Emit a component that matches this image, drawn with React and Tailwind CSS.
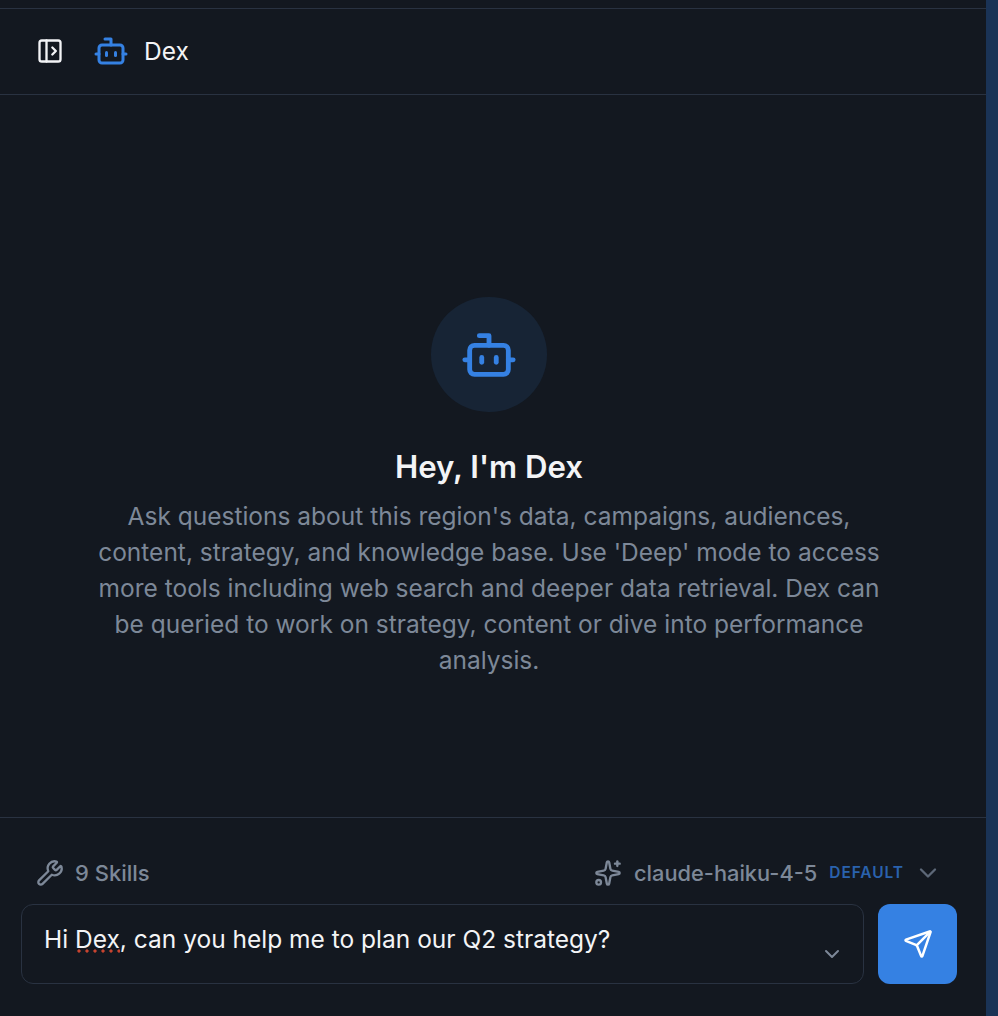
import React from "react";
import { Bot, PanelLeftOpen, Wrench, Sparkles, ChevronDown, Send } from "lucide-react";

export default function App() {
  return (
    <div className="flex h-[1016px] w-[998px] overflow-hidden bg-[#131820] font-['Inter',sans-serif]">
      <main className="flex w-[986px] flex-col">
        <div className="h-[8px] shrink-0" />
        <header className="flex h-[87px] shrink-0 items-center border-y border-[#293241] pb-[1px] pl-[36px]">
          <PanelLeftOpen className="h-[28px] w-[28px] text-[#f3f4f6]" strokeWidth={2} />
          <Bot className="ml-[29px] h-[36px] w-[36px] text-[#3581e3]" strokeWidth={2} />
          <span className="ml-[15px] text-[24.5px] font-normal leading-[32px] text-[#f3f4f6]">Dex</span>
        </header>
        <section className="flex min-h-0 flex-1 flex-col items-center pr-[8px] pt-[202px]">
          <div className="flex h-[115px] w-[116px] items-center justify-center rounded-full bg-[#172435]">
            <Bot className="h-[58px] w-[58px] text-[#3581e3]" strokeWidth={2} />
          </div>
          <h1 className="mt-[35px] text-[31.2px] font-semibold leading-[40px] text-[#f3f4f6]">Hey, I'm Dex</h1>
          <p className="mt-[11px] w-[800px] text-center text-[24.5px] leading-[36px] text-[#7d8898]">
            Ask questions about this region's data, campaigns, audiences, content, strategy, and knowledge base. Use 'Deep' mode to access more tools including web search and deeper data retrieval. Dex can be queried to work on strategy, content or dive into performance analysis.
          </p>
        </section>
        <footer className="h-[199px] shrink-0 border-t border-[#293241] px-[21px] pt-[38px]">
          <div className="flex h-[34px] items-center justify-between pl-[15px] pr-[23px]">
            <div className="flex items-center gap-[11px] text-[#7d8898]">
              <Wrench className="h-[28px] w-[28px]" strokeWidth={2} />
              <span className="text-[22px] font-medium leading-[28px]">9 Skills</span>
            </div>
            <div className="flex items-center text-[#7d8898]">
              <Sparkles className="h-[28px] w-[28px]" strokeWidth={2} />
              <span className="ml-[12px] text-[21.8px] font-medium leading-[28px]">claude-haiku-4-5</span>
              <span className="ml-[12px] text-[15.5px] font-semibold leading-[20px] tracking-[0.06em] text-[#2a62ad]">DEFAULT</span>
              <ChevronDown className="ml-[10px] h-[28px] w-[28px] text-[#5d6878]" strokeWidth={2} />
            </div>
          </div>
          <div className="mt-[14px] flex items-start gap-[14px]">
            <div className="relative h-[80px] w-[843px] rounded-[12px] border border-[#293241] px-[22px] pt-[17px] text-[24.5px] leading-[34px] text-[#f3f4f6]">
              <span>Hi </span>
              <span className="relative">
                Dex
                <span className="absolute bottom-[1px] left-0 h-[4px] w-full bg-[radial-gradient(circle,#c8432f_1.4px,transparent_1.8px)] bg-[length:8px_4px]" />
              </span>
              <span>, can you help me to plan our Q2 strategy?</span>
              <ChevronDown className="absolute bottom-[17px] right-[19px] h-[24px] w-[24px] text-[#7d8898]" strokeWidth={2} />
            </div>
            <button className="flex h-[80px] w-[79px] items-center justify-center rounded-[12px] bg-[#3581e3]">
              <Send className="h-[30px] w-[30px] text-white" strokeWidth={2} />
            </button>
          </div>
        </footer>
      </main>
      <div className="w-[12px] shrink-0 bg-[#1a3356]" />
    </div>
  );
}
